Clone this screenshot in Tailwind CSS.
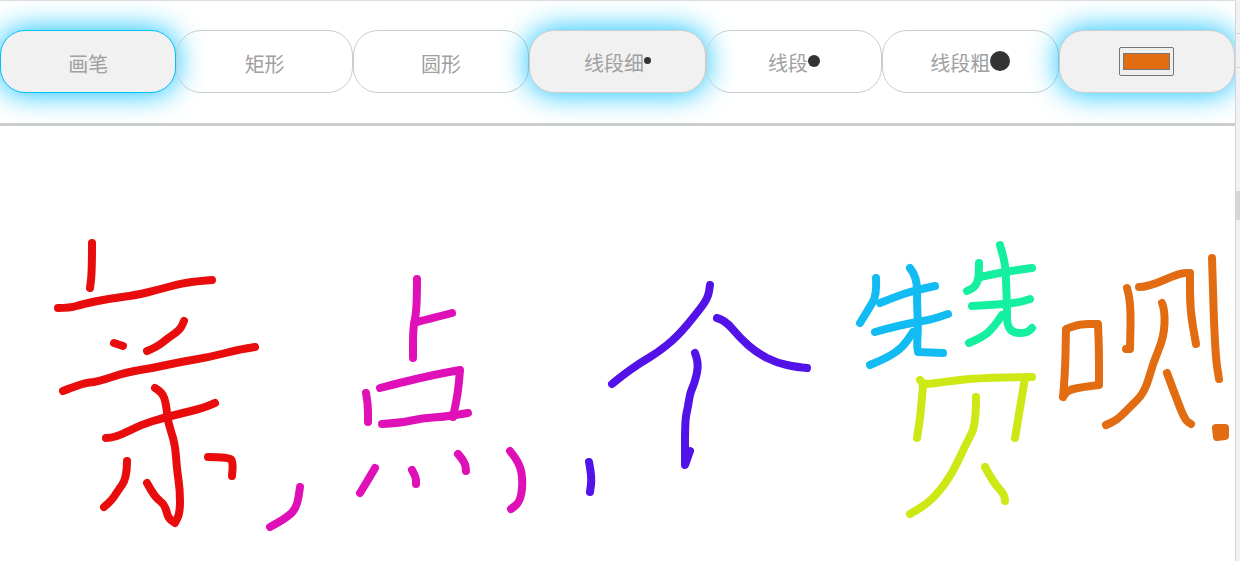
<!doctype html>
<html lang="zh">
  <head>
    <meta charset="UTF-8" />
    <title>画板</title>
    <script src="https://cdn.jsdelivr.net/npm/@tailwindcss/browser@4"></script>
  </head>
  <body class="h-[561px] w-[1240px] overflow-hidden bg-white font-['Noto_Sans_CJK_SC','Liberation_Sans',sans-serif]">
    <div class="flex h-[561px]">
      <div class="w-[1235px] overflow-hidden">
        <!-- Toolbar -->
        <div class="flex h-[126px] items-center border-t border-b-[3px] border-t-[#dddddd] border-b-[#cccccc] pb-[1px]">
          <button class="flex h-[63px] flex-1 items-center justify-center rounded-[25px] border border-[#00bfff] bg-[#f1f1f1] pt-[5px] text-[20px] font-normal text-[#a0a0a0] shadow-[0_0_30px_#00bfff]">画笔</button>
          <button class="flex h-[63px] flex-1 items-center justify-center rounded-[25px] border border-[#cccccc] pt-[5px] text-[20px] font-normal text-[#a0a0a0]">矩形</button>
          <button class="flex h-[63px] flex-1 items-center justify-center rounded-[25px] border border-[#cccccc] pt-[5px] text-[20px] font-normal text-[#a0a0a0]">圆形</button>
          <button class="flex h-[63px] flex-1 items-center justify-center rounded-[25px] border border-[#cccccc] bg-[#f1f1f1] pt-[2px] text-[20px] font-normal text-[#a0a0a0] shadow-[0_0_30px_#00bfff]">
            线段细<span class="mb-[4px] h-[7px] w-[7px] rounded-full bg-[#333333]"></span>
          </button>
          <button class="flex h-[63px] flex-1 items-center justify-center rounded-[25px] border border-[#cccccc] pt-[2px] text-[20px] font-normal text-[#a0a0a0]">
            线段<span class="mb-[4px] h-[12px] w-[12px] rounded-full bg-[#333333]"></span>
          </button>
          <button class="flex h-[63px] flex-1 items-center justify-center rounded-[25px] border border-[#cccccc] pt-[2px] text-[20px] font-normal text-[#a0a0a0]">
            线段粗<span class="mb-[4px] h-[20px] w-[20px] rounded-full bg-[#333333]"></span>
          </button>
          <button class="flex h-[63px] flex-1 items-center justify-center rounded-[25px] border border-[#cccccc] bg-[#f1f1f1] shadow-[0_0_30px_#00bfff]">
            <span class="flex h-[29px] w-[55px] items-center justify-center rounded-[2px] border border-[#767676] bg-[#efefef]">
              <span class="h-[17px] w-[47px] border border-[#767676] bg-[#e26c12]"></span>
            </span>
          </button>
        </div>

        <!-- Drawing canvas, coordinates are page pixels -->
        <svg id="board" class="block h-[435px] w-[1235px]" viewBox="0 126 1235 435" fill="none" stroke-linecap="round" stroke-linejoin="round" stroke-width="8"></svg>
      </div>

      <!-- Scrollbar strip -->
      <div class="flex w-[5px] flex-col border-l border-[#d4d4dc] bg-[#f1f1f4]">
        <div class="h-[34px] border-b border-[#d4d4dc]"></div>
        <div class="h-[34px] border-b border-[#d4d4dc]"></div>
        <div class="h-[123px]"></div>
        <div class="h-[29px] bg-[#d6d6d6]"></div>
      </div>
    </div>
    <script>
      // pen strokes as x,y lists; a repeated point keeps a sharp corner
      const strokes = {
        "#e80c0c": [
          [92,243, 92,272, 90,288],
          [58,308, 70,308, 83,304, 107,299, 137,295, 157,290, 183,283, 200,281, 212,280],
          [114,343, 123,346],
          [147,351, 157,347, 168,338, 180,330, 184,321],
          [63,391, 83,383, 97,382, 127,372, 153,368, 180,362, 210,357, 237,350, 255,347],
          [155,388, 162,392, 166,403, 168,423, 175,443, 177,470, 180,490, 180,513, 175,523, 175,523, 168,518, 165,505, 155,497, 147,483],
          [106,438, 115,438, 140,425, 163,418, 183,413, 203,408, 215,403],
          [127,461, 127,478, 117,492, 112,500, 104,507],
          [208,457, 230,457, 233,463, 232,476],
        ],
        "#e010b8": [
          [270,527, 287,518, 297,507, 300,487],
          [417,279, 417,310, 413,327, 413,358],
          [417,322, 433,318, 452,313],
          [380,388, 403,382, 433,375, 460,370, 460,370, 458,393, 453,417],
          [366,393, 368,403, 368,422],
          [382,424, 400,423, 423,418, 443,417, 468,413],
          [375,468, 368,480, 360,493],
          [412,470, 416,477, 416,484],
          [458,454, 465,462, 466,471],
          [510,451, 520,463, 523,483, 520,502, 511,509],
        ],
        "#5212e8": [
          [589,462, 592,477, 590,492],
          [612,384, 623,375, 640,363, 657,353, 677,337, 697,313, 708,298, 710,285],
          [717,318, 725,320, 740,338, 757,353, 777,363, 797,367, 807,368],
          [695,353, 699,363, 695,382, 690,393, 688,407, 685,420, 685,465, 685,465, 690,451],
        ],
        "#12bcf2": [
          [876,278, 877,295, 868,310, 860,323],
          [880,303, 900,295, 917,290, 935,286],
          [910,268, 917,277, 917,302, 918,328, 917,345, 918,352, 918,352, 943,353],
          [875,332, 900,325, 930,320, 948,314],
          [870,365, 887,358, 903,347, 913,332],
        ],
        "#14f0a0": [
          [1000,245, 1005,262, 1006,278, 1007,308, 1007,325, 1013,333, 1027,333, 1032,328],
          [979,263, 979,278, 975,287, 967,291],
          [980,277, 1003,272, 1032,268],
          [972,306, 990,305, 1017,303, 1030,299],
          [969,343, 983,337, 993,328, 1002,315],
        ],
        "#cde814": [
          [920,380, 922,385, 943,382, 977,378, 1032,377],
          [923,385, 921,412, 917,438],
          [1025,378, 1020,408, 1015,438],
          [976,397, 976,425, 967,442, 950,478, 930,502, 910,514],
          [985,467, 993,482, 1004,494, 1005,501],
        ],
        "#e26c12": [
          [1063,397, 1065,377, 1066,329, 1066,329, 1080,324, 1098,324, 1098,324, 1099,350, 1099,385, 1099,385, 1083,387, 1068,390, 1063,397],
          [1127,288, 1131,300, 1130,349, 1130,349, 1126,349],
          [1139,287, 1148,287, 1180,273, 1190,273, 1190,273, 1190,310, 1196,344],
          [1212,258, 1213,290, 1214,323, 1216,360, 1219,379],
          [1162,303, 1165,310, 1164,337, 1153,363, 1145,392, 1130,407, 1117,420, 1106,425],
          [1167,373, 1177,400, 1185,420, 1191,424],
        ],
      };

      const board = document.getElementById("board");

      function addPath(color, d, fill) {
        const path = document.createElementNS("http://www.w3.org/2000/svg", "path");
        path.setAttribute("d", d);
        path.setAttribute("stroke", color);
        if (fill) path.setAttribute("fill", fill);
        board.appendChild(path);
      }

      // same midpoint smoothing a canvas pen usually does
      function smooth(p) {
        let d = `M${p[0]} ${p[1]}`;
        for (let i = 2; i < p.length - 2; i += 2) {
          const mx = (p[i] + p[i + 2]) / 2;
          const my = (p[i + 1] + p[i + 3]) / 2;
          d += `Q${p[i]} ${p[i + 1]} ${mx} ${my}`;
        }
        return d + `L${p[p.length - 2]} ${p[p.length - 1]}`;
      }

      for (const color in strokes) {
        strokes[color].forEach((p) => addPath(color, smooth(p)));
      }
      // the exclamation dot
      addPath("#e26c12", "M1216 428L1225 428L1225 436L1217 437Z", "#e26c12");
    </script>
  </body>
</html>
